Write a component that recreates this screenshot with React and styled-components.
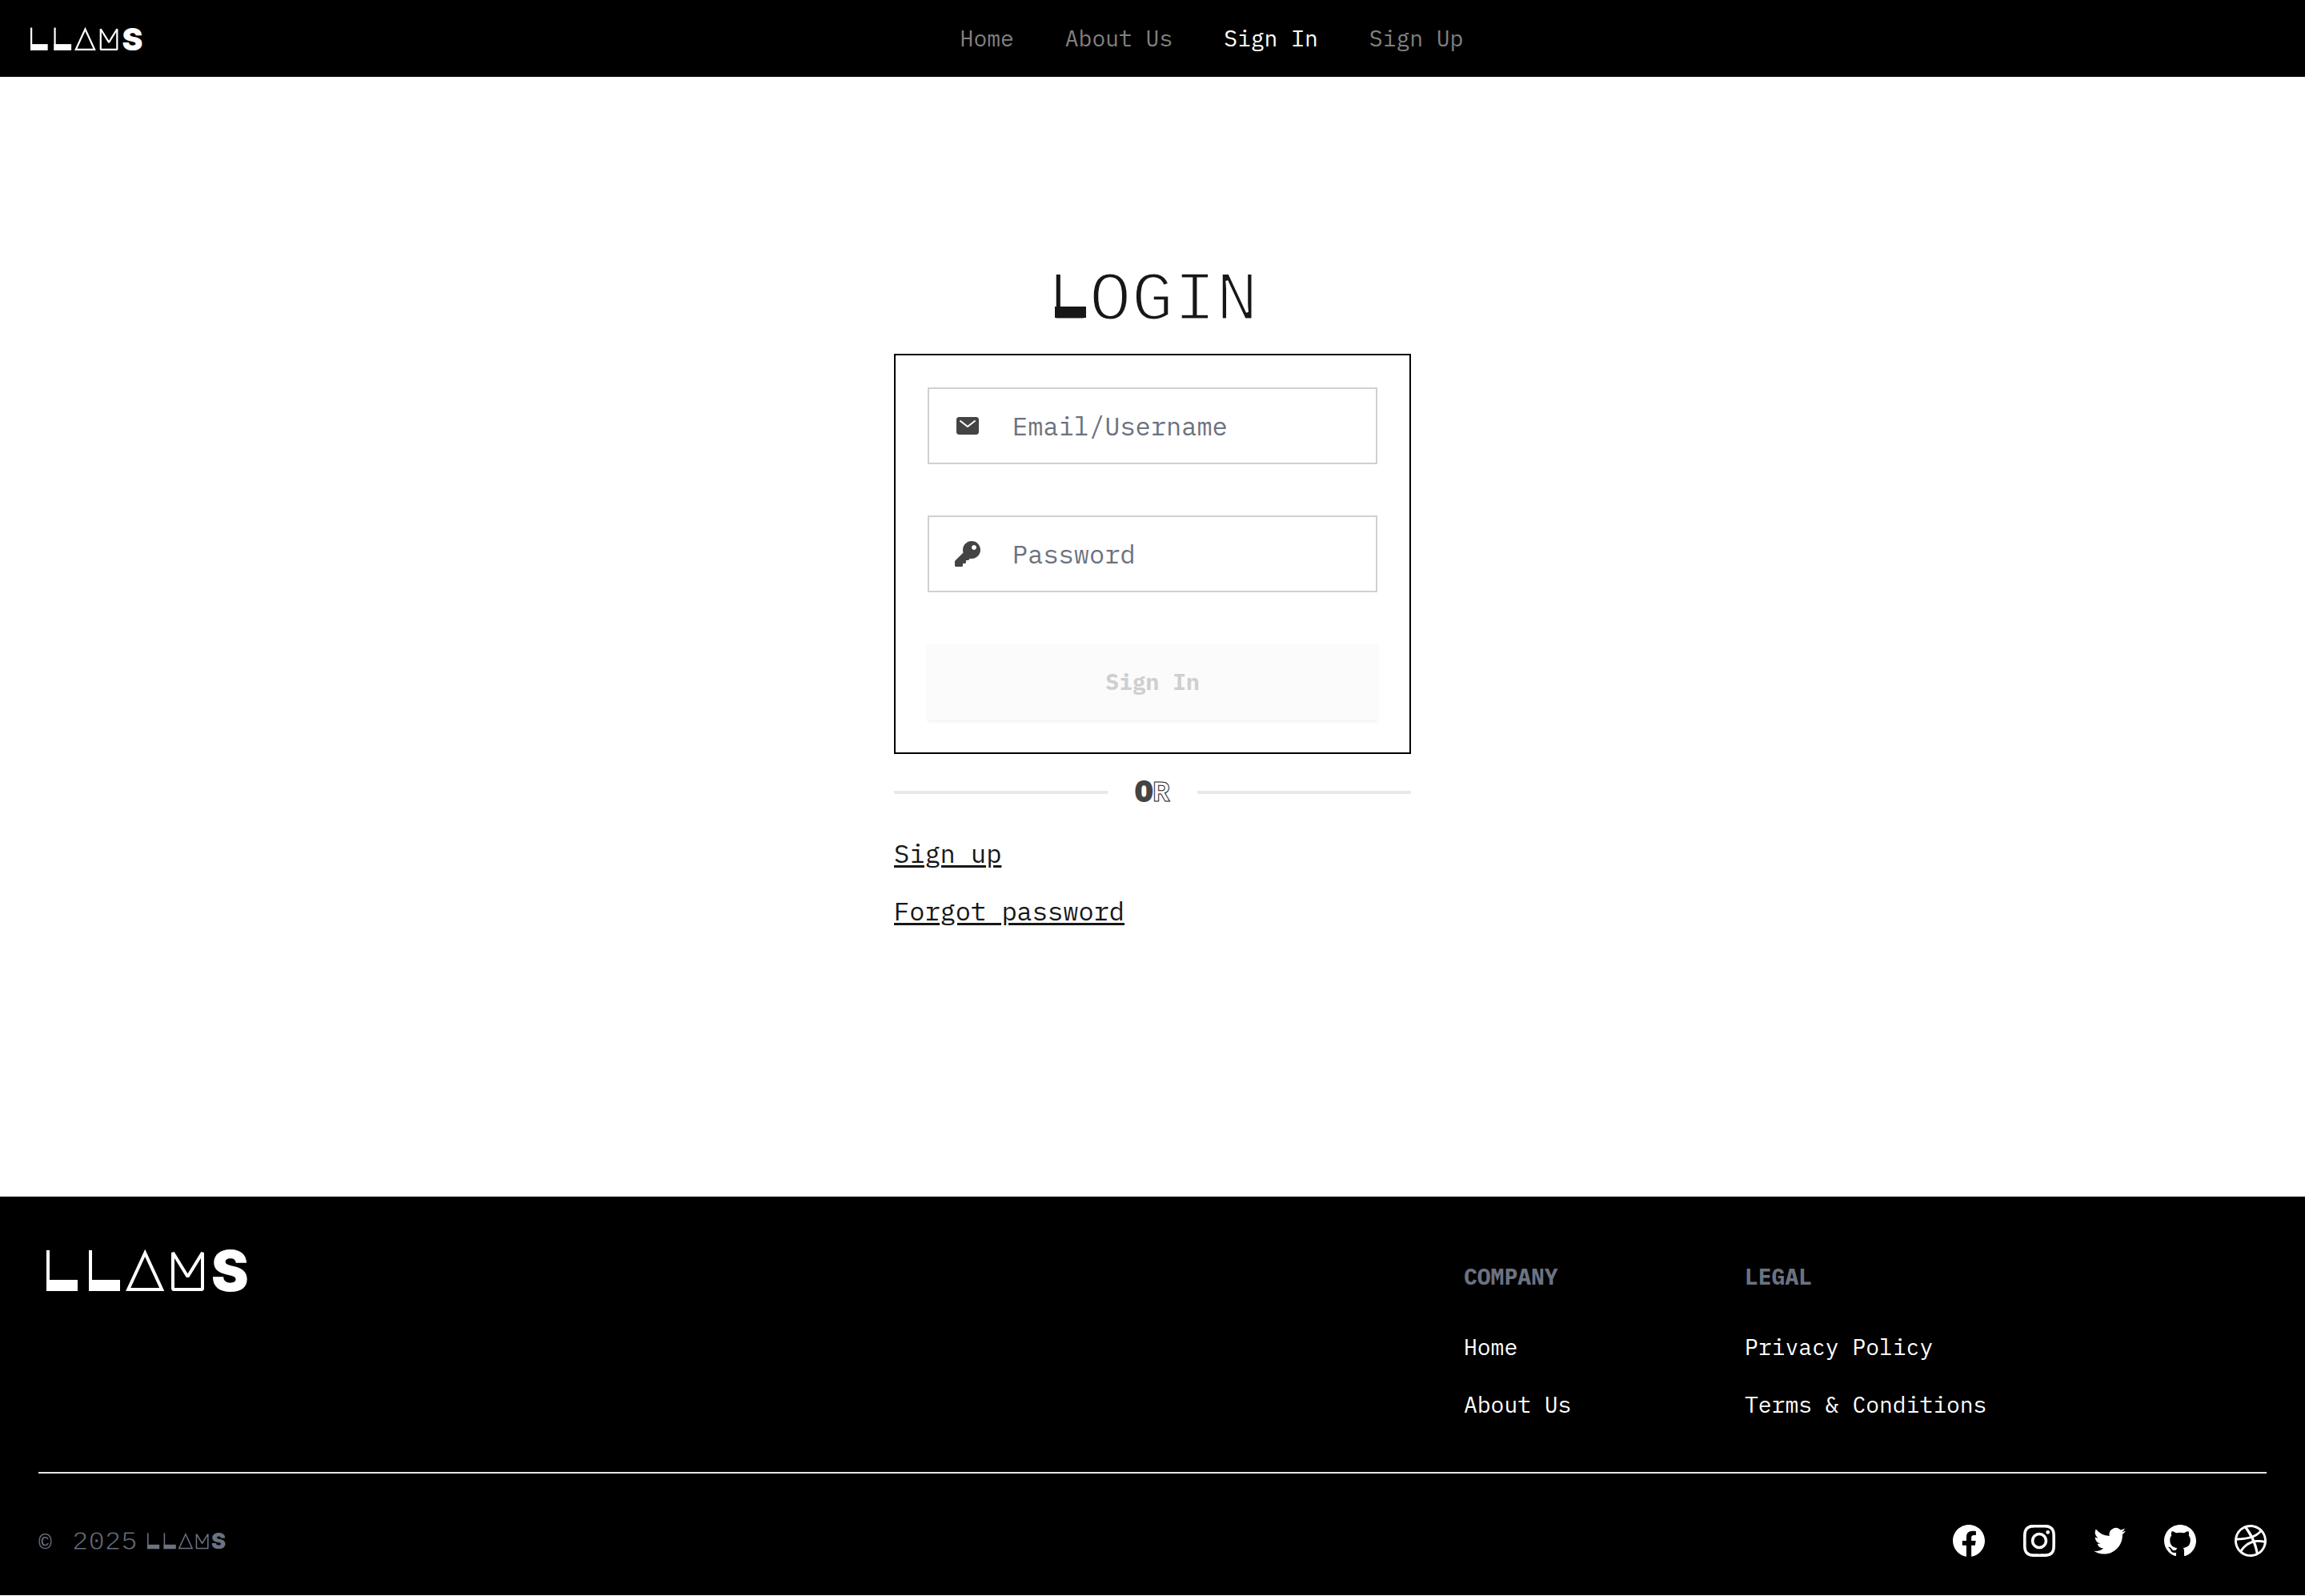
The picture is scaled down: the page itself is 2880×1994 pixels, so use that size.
import React from 'react';
import styled, { createGlobalStyle, css } from 'styled-components';
import { IoMail } from 'react-icons/io5';
import { FaKey } from 'react-icons/fa';

const GlobalStyle = createGlobalStyle`
  *, *::before, *::after { box-sizing: border-box; }
  body {
    margin: 0;
    background: #ffffff;
    color: #171717;
    font-family: "IBM Plex Mono", "Liberation Mono", monospace;
    font-size: 28px;
    line-height: 40px;
  }
`;

const Page = styled.div`
  display: flex;
  flex-direction: column;
  min-height: 100vh;
  padding-bottom: 1px;
`;

const Header = styled.header`
  display: flex;
  align-items: center;
  height: 96px;
  padding: 0 30px 0 38px;
  background: #000000;
  color: #ffffff;
`;

const HomeLink = styled.a`
  display: flex;
  align-items: flex-start;
  padding-top: 2px;
  color: inherit;
`;

const LogoMark = styled.svg`
  display: block;
  width: ${(p) => p.$width}px;
  height: auto;
  overflow: visible;
`;

const Nav = styled.nav`
  display: flex;
  flex: 1;
  justify-content: center;
  gap: 64px;
`;

const NavLink = styled.a`
  color: ${(p) => (p.$active ? '#ffffff' : '#808080')};
  text-decoration: none;
`;

const Main = styled.main`
  display: flex;
  flex: 1;
  justify-content: center;
  padding: 232px 32px 0;
`;

const LoginColumn = styled.div`
  display: flex;
  flex-direction: column;
  width: 646px;
`;

/* The background-coloured stroke eats into the glyphs and leaves hairlines. */
const hairline = css`
  font-family: "Liberation Mono", monospace;
  font-weight: 400;
  -webkit-text-stroke: ${(p) => p.$thin}px ${(p) => p.$ground};
`;

const Title = styled.h1`
  ${hairline}
  margin: 0 0 18px;
  font-size: 88px;
  line-height: 96px;
  text-align: center;
`;

const Initial = styled.span`
  position: relative;

  &::after {
    content: "";
    position: absolute;
    left: 10px;
    bottom: 28px;
    width: 39px;
    height: 14px;
    background: #171717;
  }
`;

const Card = styled.form`
  display: flex;
  flex-direction: column;
  gap: 64px;
  padding: 40px;
  border: 2px solid #000000;
`;

const Field = styled.label`
  display: flex;
  align-items: center;
  height: 96px;
  border: 2px solid #d0d0d0;
`;

const FieldIcon = styled.span`
  display: flex;
  flex: none;
  justify-content: center;
  width: 96px;
  color: #444444;
`;

const FieldInput = styled.input`
  flex: 1;
  min-width: 0;
  height: 100%;
  padding: 0 8px;
  border: 0;
  outline: 0;
  background: transparent;
  color: #171717;
  font: inherit;
  font-size: 32px;

  &::placeholder {
    color: #6b7280;
    opacity: 1;
  }
`;

const SubmitButton = styled.button`
  height: 96px;
  border: 0;
  background: #fbfbfb;
  box-shadow: 0 2px 4px rgba(0, 0, 0, 0.06);
  color: #cfcfcf;
  font: inherit;
  font-weight: 700;
`;

const Divider = styled.div`
  display: flex;
  align-items: center;
  gap: 34px;
  height: 48px;
  margin: 24px 0 32px;
  color: #444444;
  font-size: 36px;
  line-height: 48px;

  &::before,
  &::after {
    content: "";
    flex: 1;
    height: 4px;
    background: #e8e8e8;
  }
`;

const DividerText = styled.span`
  display: flex;
  align-items: baseline;
`;

const HeavyLetter = styled.span`
  font-weight: 700;
  -webkit-text-stroke: 2px #444444;
`;

const OutlineLetter = styled.span`
  color: #ffffff;
  font-family: "Liberation Mono", monospace;
  font-weight: 700;
  -webkit-text-stroke: 1px #222222;
`;

const HelpLinks = styled.div`
  display: flex;
  flex-direction: column;
  align-items: flex-start;
  gap: 32px;
`;

const HelpLink = styled.a`
  color: #171717;
  font-size: 32px;
  text-decoration: underline;
  text-decoration-thickness: 3px;
  text-underline-offset: 3px;
`;

const Footer = styled.footer`
  padding: 64px 48px 48px;
  background: #000000;
  color: #ffffff;
`;

const FooterTop = styled.div`
  display: grid;
  grid-template-columns: 1fr 303px 652px;
  gap: 48px;
  padding: 0 0 64px 10px;
  border-bottom: 2px solid #e5e7eb;
`;

const FooterColumn = styled.section`
  padding-top: 16px;
`;

const FooterHeading = styled.h2`
  margin: 0 0 48px;
  color: #6b7280;
  font-size: 28px;
  font-weight: 700;
  line-height: 40px;
`;

const FooterList = styled.ul`
  display: flex;
  flex-direction: column;
  gap: 32px;
  margin: 0;
  padding: 0;
  list-style: none;
`;

const FooterLink = styled.a`
  color: #ffffff;
  text-decoration: none;
`;

const FooterBottom = styled.div`
  display: flex;
  align-items: center;
  justify-content: space-between;
  padding-top: 64px;
`;

const Copyright = styled.div`
  display: flex;
  align-items: center;
  gap: 12px;
  color: #6b7280;
`;

const CopyrightSign = styled.span`
  width: 30px;
  padding-top: 8px;
  font-family: "Liberation Mono", monospace;
  font-size: 28px;
  line-height: 32px;
`;

const Year = styled.span`
  ${hairline}
  padding-top: 4px;
  font-size: 34px;
  line-height: 36px;
`;

const SocialLinks = styled.div`
  display: flex;
  gap: 48px;
`;

const SocialLink = styled.a`
  display: flex;
  color: #ffffff;
`;

function Logo({ width }) {
  return (
    <LogoMark $width={width} viewBox="0 0 252 54" role="img" aria-label="LLAMS">
      <g fill="currentColor">
        <rect x="0" y="1" width="4" height="51" />
        <rect x="0" y="38" width="39" height="14" />
        <rect x="53" y="1" width="4" height="51" />
        <rect x="53" y="38" width="39" height="14" />
        <text x="206" y="52" fontFamily="Inter, sans-serif" fontSize="70" fontWeight="900">S</text>
      </g>
      <g fill="none" stroke="currentColor" strokeWidth="4">
        <path d="M123.200 4.500 102.200 50H144.200Z" />
        <path d="M158 50V4L176.500 34 195 4V50Z" strokeLinejoin="bevel" />
      </g>
    </LogoMark>
  );
}

const socials = [
  {
    name: 'Facebook',
    d: 'M22 12c0-5.523-4.477-10-10-10S2 6.477 2 12c0 4.991 3.657 9.128 8.438 9.878v-6.987h-2.54V12h2.54V9.797c0-2.506 1.492-3.89 3.777-3.89 1.094 0 2.238.195 2.238.195v2.46h-1.26c-1.243 0-1.63.771-1.63 1.562V12h2.773l-.443 2.890h-2.330v6.988C18.343 21.128 22 16.991 22 12z',
  },
  {
    name: 'Instagram',
    d: 'M12.315 2c2.430 0 2.784.013 3.808.060 1.064.049 1.791.218 2.427.465a4.902 4.902 0 011.772 1.153 4.902 4.902 0 011.153 1.772c.247.636.416 1.363.465 2.427.048 1.067.060 1.407.060 4.123v.080c0 2.643-.012 2.987-.060 4.043-.049 1.064-.218 1.791-.465 2.427a4.902 4.902 0 01-1.153 1.772 4.902 4.902 0 01-1.772 1.153c-.636.247-1.363.416-2.427.465-1.067.048-1.407.060-4.123.060h-.080c-2.643 0-2.987-.012-4.043-.060-1.064-.049-1.791-.218-2.427-.465a4.902 4.902 0 01-1.772-1.153 4.902 4.902 0 01-1.153-1.772c-.247-.636-.416-1.363-.465-2.427-.047-1.024-.060-1.379-.060-3.808v-.630c0-2.430.013-2.784.060-3.808.049-1.064.218-1.791.465-2.427a4.902 4.902 0 011.153-1.772A4.902 4.902 0 015.450 2.525c.636-.247 1.363-.416 2.427-.465C8.901 2.013 9.256 2 11.685 2h.630zm-.081 1.802h-.468c-2.456 0-2.784.011-3.807.058-.975.045-1.504.207-1.857.344-.467.182-.8.398-1.150.748-.350.350-.566.683-.748 1.150-.137.353-.300.882-.344 1.857-.047 1.023-.058 1.351-.058 3.807v.468c0 2.456.011 2.784.058 3.807.045.975.207 1.504.344 1.857.182.466.399.8.748 1.150.350.350.683.566 1.150.748.353.137.882.300 1.857.344 1.054.048 1.370.058 4.041.058h.080c2.597 0 2.917-.010 3.960-.058.976-.045 1.505-.207 1.858-.344.466-.182.8-.398 1.150-.748.350-.350.566-.683.748-1.150.137-.353.300-.882.344-1.857.048-1.055.058-1.370.058-4.041v-.080c0-2.597-.010-2.917-.058-3.960-.045-.976-.207-1.505-.344-1.858a3.097 3.097 0 00-.748-1.150 3.098 3.098 0 00-1.150-.748c-.353-.137-.882-.300-1.857-.344-1.023-.047-1.351-.058-3.807-.058zM12 6.865a5.135 5.135 0 110 10.270 5.135 5.135 0 010-10.270zm0 1.802a3.333 3.333 0 100 6.666 3.333 3.333 0 000-6.666zm5.338-3.205a1.200 1.200 0 110 2.400 1.200 1.200 0 010-2.400z',
  },
  {
    name: 'Twitter',
    d: 'M8.290 20.251c7.547 0 11.675-6.253 11.675-11.675 0-.178 0-.355-.012-.530A8.348 8.348 0 0022 5.920a8.190 8.190 0 01-2.357.646 4.118 4.118 0 001.804-2.270 8.224 8.224 0 01-2.605.996 4.107 4.107 0 00-6.993 3.743 11.650 11.650 0 01-8.457-4.287 4.106 4.106 0 001.270 5.477A4.072 4.072 0 012.800 9.713v.052a4.105 4.105 0 003.292 4.022 4.095 4.095 0 01-1.853.070 4.108 4.108 0 003.834 2.850A8.233 8.233 0 012 18.407a11.616 11.616 0 006.290 1.840',
  },
  {
    name: 'GitHub',
    d: 'M12 2C6.477 2 2 6.484 2 12.017c0 4.425 2.865 8.180 6.839 9.504.500.092.682-.217.682-.483 0-.237-.008-.868-.013-1.703-2.782.605-3.369-1.343-3.369-1.343-.454-1.158-1.110-1.466-1.110-1.466-.908-.620.069-.608.069-.608 1.003.070 1.531 1.032 1.531 1.032.892 1.530 2.341 1.088 2.910.832.092-.647.350-1.088.636-1.338-2.220-.253-4.555-1.113-4.555-4.951 0-1.093.390-1.988 1.029-2.688-.103-.253-.446-1.272.098-2.650 0 0 .840-.270 2.750 1.026A9.564 9.564 0 0112 6.844c.850.004 1.705.115 2.504.337 1.909-1.296 2.747-1.027 2.747-1.027.546 1.379.202 2.398.100 2.651.640.700 1.028 1.595 1.028 2.688 0 3.848-2.339 4.695-4.566 4.943.359.309.678.920.678 1.855 0 1.338-.012 2.419-.012 2.747 0 .268.180.580.688.482A10.019 10.019 0 0022 12.017C22 6.484 17.522 2 12 2z',
  },
  {
    name: 'Dribbble',
    d: 'M12 2C6.480 2 2 6.480 2 12s4.480 10 10 10c5.510 0 10-4.480 10-10S17.510 2 12 2zm6.605 4.610a8.502 8.502 0 011.930 5.314c-.281-.054-3.101-.629-5.943-.271-.065-.141-.120-.293-.184-.445a25.416 25.416 0 00-.564-1.236c3.145-1.280 4.577-3.124 4.761-3.362zM12 3.475c2.170 0 4.154.813 5.662 2.148-.152.216-1.443 1.941-4.480 3.080-1.399-2.570-2.950-4.675-3.189-5A8.687 8.687 0 0112 3.475zm-3.633.803a53.896 53.896 0 013.167 4.935c-3.992 1.063-7.517 1.040-7.896 1.040a8.581 8.581 0 014.729-5.975zM3.453 12.010v-.260c.370.010 4.512.065 8.775-1.215.250.477.477.965.694 1.453-.109.033-.228.065-.336.098-4.404 1.420-6.747 5.303-6.942 5.629a8.522 8.522 0 01-2.190-5.705zM12 20.547a8.482 8.482 0 01-5.239-1.800c.152-.315 1.888-3.656 6.703-5.337.022-.010.033-.010.054-.022a35.318 35.318 0 011.823 6.475 8.400 8.400 0 01-3.341.684zm4.761-1.465c-.086-.520-.542-3.015-1.659-6.084 2.679-.423 5.022.271 5.314.369a8.468 8.468 0 01-3.655 5.715z',
  },
];

const navItems = ['Home', 'About Us', 'Sign In', 'Sign Up'];

const footerColumns = [
  { title: 'COMPANY', links: ['Home', 'About Us'] },
  { title: 'LEGAL', links: ['Privacy Policy', 'Terms & Conditions'] },
];

export default function App() {
  return (
    <Page>
      <GlobalStyle />
      <Header>
        <HomeLink href="#"><Logo width={140} /></HomeLink>
        <Nav>
          {navItems.map((item) => (
            <NavLink key={item} href="#" $active={item === 'Sign In'}>{item}</NavLink>
          ))}
        </Nav>
      </Header>

      <Main>
        <LoginColumn>
          <Title $thin={3} $ground="#ffffff"><Initial>L</Initial>OGIN</Title>
          <Card>
            <Field>
              <FieldIcon><IoMail size={32} /></FieldIcon>
              <FieldInput type="text" placeholder="Email/Username" aria-label="Email/Username" />
            </Field>
            <Field>
              <FieldIcon><FaKey size={32} /></FieldIcon>
              <FieldInput type="password" placeholder="Password" aria-label="Password" />
            </Field>
            <SubmitButton type="submit" disabled>Sign In</SubmitButton>
          </Card>
          <Divider>
            <DividerText><HeavyLetter>O</HeavyLetter><OutlineLetter>R</OutlineLetter></DividerText>
          </Divider>
          <HelpLinks>
            <HelpLink href="#">Sign up</HelpLink>
            <HelpLink href="#">Forgot password</HelpLink>
          </HelpLinks>
        </LoginColumn>
      </Main>

      <Footer>
        <FooterTop>
          <HomeLink href="#"><Logo width={252} /></HomeLink>
          {footerColumns.map((column) => (
            <FooterColumn key={column.title}>
              <FooterHeading>{column.title}</FooterHeading>
              <FooterList>
                {column.links.map((link) => (
                  <li key={link}><FooterLink href="#">{link}</FooterLink></li>
                ))}
              </FooterList>
            </FooterColumn>
          ))}
        </FooterTop>
        <FooterBottom>
          <Copyright>
            <CopyrightSign>©</CopyrightSign>
            <Year $thin={1} $ground="#000000">2025</Year>
            <Logo width={98} />
          </Copyright>
          <SocialLinks>
            {socials.map((social) => (
              <SocialLink key={social.name} href="#" aria-label={social.name}>
                <svg width="40" height="40" viewBox="2 2 20 20" fill="currentColor" aria-hidden="true">
                  <path fillRule="evenodd" clipRule="evenodd" d={social.d} />
                </svg>
              </SocialLink>
            ))}
          </SocialLinks>
        </FooterBottom>
      </Footer>
    </Page>
  );
}
